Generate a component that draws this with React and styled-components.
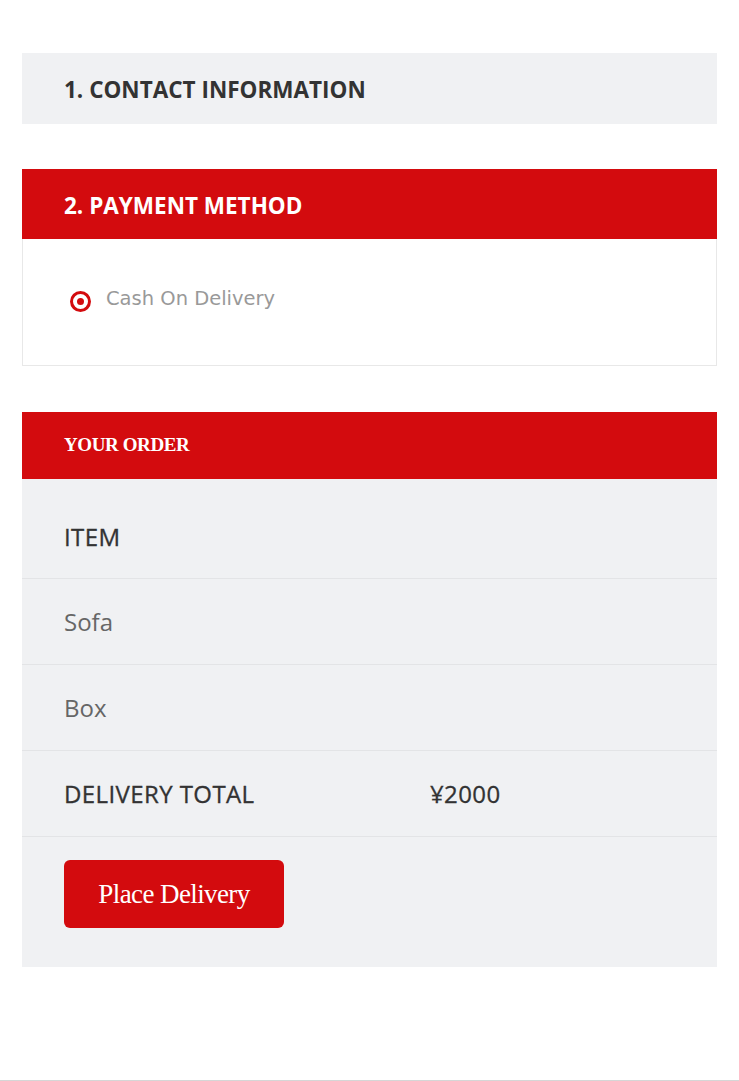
import React, { useState } from "react"
import styled, { createGlobalStyle } from "styled-components"

const GlobalStyle = createGlobalStyle`
  html, body {
    margin: 0;
    padding: 0;
    background: #fff;
  }
  body {
    font-family: "Open Sans", "Liberation Sans", sans-serif;
  }
`

const Page = styled.div`
  min-height: 1081px;
  border-bottom: 1px solid #d6d6d6;
  padding: 53px 22px 0;
  box-sizing: border-box;
`

const Section = styled.section`
  margin-bottom: ${props => props.gap || 45}px;
`

const SectionHead = styled.div`
  background: ${props => (props.active ? "#d30b0e" : "#f0f1f3")};
  color: ${props => (props.active ? "#fff" : "#333")};
  height: ${props => props.h || 70}px;
  display: flex;
  align-items: center;
  padding: 2px 42px 0;
  box-sizing: border-box;
  font-size: 22.5px;
  font-weight: 700;
  text-transform: uppercase;
`

const SerifHead = styled(SectionHead)`
  font-family: "Liberation Serif", "DejaVu Serif", serif;
  font-size: 19px;
  letter-spacing: -0.4px;
  padding: 0 42px 2px;
`

const PaymentBody = styled.div`
  border: 1px solid #e8e8e8;
  border-top: none;
  height: 127px;
  box-sizing: border-box;
  padding: 45px 42px 0 47px;
`

const RadioLabel = styled.label`
  display: flex;
  align-items: center;
  gap: 15px;
  font-family: "DejaVu Sans", Verdana, sans-serif;
  font-size: 19.5px;
  color: #999;
  cursor: pointer;
`

const RadioDot = styled.span`
  width: 21px;
  height: 21px;
  border: 3px solid #d30b0e;
  border-radius: 50%;
  box-sizing: border-box;
  display: flex;
  align-items: center;
  justify-content: center;
  margin-top: 7px;
  &::after {
    content: "";
    width: 7px;
    height: 7px;
    border-radius: 50%;
    background: ${props => (props.checked ? "#d30b0e" : "transparent")};
  }
`

const OrderTable = styled.div`
  background: #f0f1f3;
`

const Row = styled.div`
  display: grid;
  grid-template-columns: 366px 1fr;
  align-items: center;
  height: ${props => props.h || 86}px;
  padding: ${props => props.pt || 0}px 42px 0;
  box-sizing: border-box;
  border-bottom: 1px solid #e3e4e6;
  font-size: 24px;
  color: ${props => (props.muted ? "#666" : "#333")};
  letter-spacing: ${props => (props.muted ? 0 : 0.4)}px;
  -webkit-text-stroke: ${props => (props.muted ? 0 : 0.3)}px currentColor;
`

const ButtonRow = styled.div`
  padding: 23px 42px 39px;
`

const PlaceButton = styled.button`
  width: 220px;
  height: 68px;
  border: none;
  border-radius: 6px;
  background: #d30b0e;
  color: #fff;
  font-family: "Liberation Serif", "DejaVu Serif", serif;
  font-size: 27px;
  letter-spacing: -0.6px;
  cursor: pointer;
`

const App = () => {
  const [method] = useState("cod")
  const items = ["Sofa", "Box"]

  return (
    <>
      <GlobalStyle />
      <Page>
        <Section>
          <SectionHead h={71}>1. Contact Information</SectionHead>
        </Section>

        <Section gap={46}>
          <SectionHead active>2. Payment Method</SectionHead>
          <PaymentBody>
            <RadioLabel>
              <RadioDot checked={method === "cod"} />
              Cash On Delivery
            </RadioLabel>
          </PaymentBody>
        </Section>

        <Section>
          <SerifHead active h={67}>Your Order</SerifHead>
          <OrderTable>
            <Row h={100} pt={16}>
              <span>ITEM</span>
            </Row>
            {items.map(item => (
              <Row key={item} muted>
                <span>{item}</span>
              </Row>
            ))}
            <Row>
              <span>DELIVERY TOTAL</span>
              <span>¥2000</span>
            </Row>
            <ButtonRow>
              <PlaceButton>Place Delivery</PlaceButton>
            </ButtonRow>
          </OrderTable>
        </Section>
      </Page>
    </>
  )
}

export default App
